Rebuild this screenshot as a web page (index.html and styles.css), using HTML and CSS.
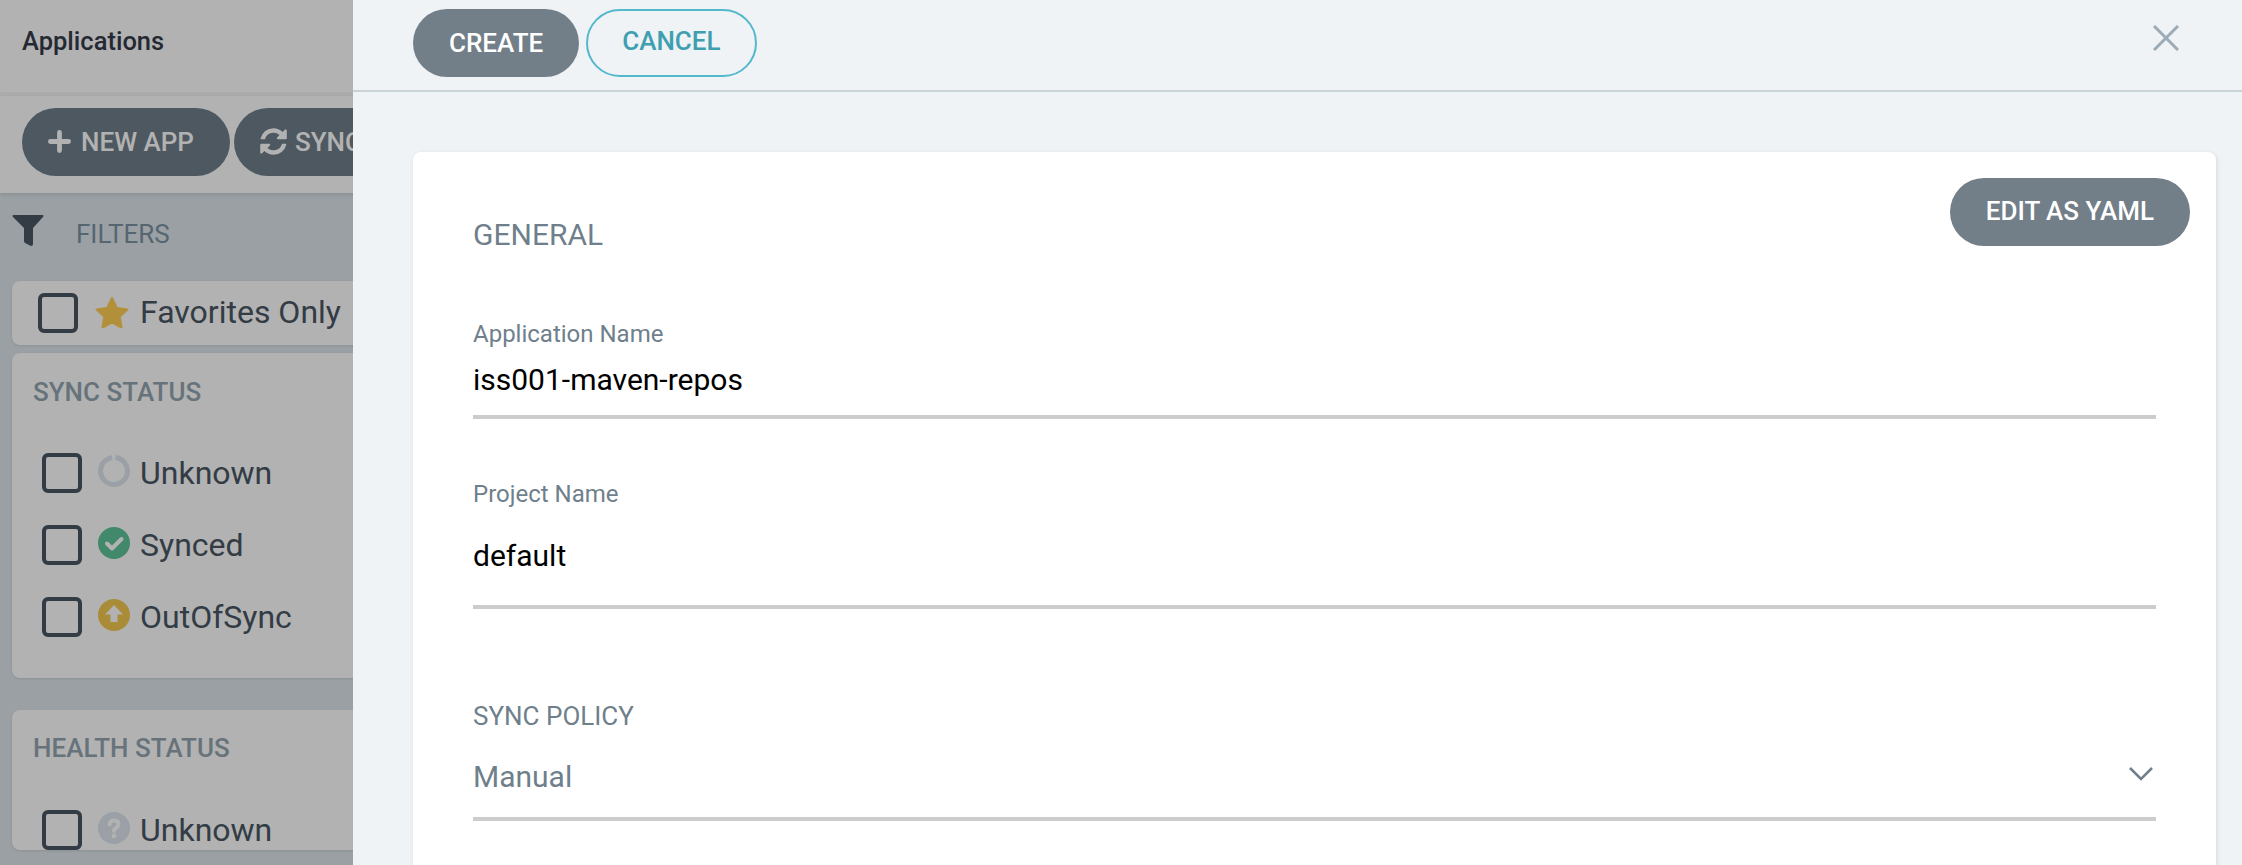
FILE: index.html
```html
<!DOCTYPE html>
<html lang="en">
<head>
<meta charset="utf-8">
<title>Applications</title>
<link rel="stylesheet" href="styles.css">
</head>
<body>
<div class="page">
  <aside class="side">
    <div class="topbar">Applications</div>
    <div class="toolbar">
      <button class="btn dark"><svg class="tool-icon" viewBox="0 0 24 24"><path d="M12 2.500v19M2.500 12h19"/></svg>NEW APP</button>
      <button class="btn dark"><svg class="sync-icon" viewBox="0 0 1792 1792"><path d="M1639 1056q0 5-1 7-64 268-268 434.5t-478 166.5q-146 0-282.5-55t-243.5-157l-129 129q-19 19-45 19t-45-19-19-45v-448q0-26 19-45t45-19h448q26 0 45 19t19 45-19 45l-137 137q71 66 161 102t187 36q134 0 250-65t186-179q11-17 53-117 8-23 30-23h192q13 0 22.5 9.5t9.5 22.5zm25-800v448q0 26-19 45t-45 19h-448q-26 0-45-19t-19-45 19-45l138-138q-148-137-349-137-134 0-250 65t-186 179q-11 17-53 117-8 23-30 23h-199q-13 0-22.5-9.5t-9.5-22.5v-7q65-268 270-434.5t480-166.5q146 0 284 55.5t245 156.5l130-129q19-19 45-19t45 19 19 45z"/></svg>SYNC APPS</button>
    </div>
    <div class="filters">
      <div class="filters-head">
        <svg class="funnel" viewBox="0 0 32 32"><path d="M1 0h30q1 1 0 2L21 13v16q0 2-2 2l-6-3q-1-1-1-2V13L1 2q-1-1 0-2z"/></svg>
        <span class="filters-label">FILTERS</span>
      </div>
      <div class="card fav">
        <span class="check"></span>
        <svg class="star" viewBox="0 0 34 32"><path d="M17 2l4.800 9.900 10.700 1.500-7.800 7.500 1.900 10.700L17 26.400l-9.600 5.200 1.900-10.700-7.800-7.500 10.700-1.500z"/></svg>
        <span class="row-text fav-text">Favorites Only</span>
      </div>
      <div class="card group sync-group">
        <div class="group-title">SYNC STATUS</div>
        <div class="row">
          <span class="check"></span>
          <svg class="status" viewBox="0 0 32 32"><circle class="ring" cx="16" cy="16" r="13.500" stroke-dasharray="81 3.800" transform="rotate(-84 16 16)"/></svg>
          <span class="row-text">Unknown</span>
        </div>
        <div class="row">
          <span class="check"></span>
          <svg class="status" viewBox="0 0 32 32"><circle class="green" cx="16" cy="16" r="16"/><path class="tick" d="M9 16.500l5 5 9.500-9.500"/></svg>
          <span class="row-text">Synced</span>
        </div>
        <div class="row">
          <span class="check"></span>
          <svg class="status" viewBox="0 0 32 32"><circle class="amber" cx="16" cy="16" r="16"/><path class="arrow" d="M16 6l9 9.500h-5.500V23h-7v-7.500H7z"/></svg>
          <span class="row-text">OutOfSync</span>
        </div>
      </div>
      <div class="card group health-group">
        <div class="group-title">HEALTH STATUS</div>
        <div class="row">
          <span class="check"></span>
          <svg class="status" viewBox="0 0 32 32"><circle class="grey" cx="16" cy="16" r="16"/><path class="tick" d="M11.500 12.500q.5-4 4.500-4 4.500 0 4.500 3.800 0 2.200-2.300 3.500-2.200 1.300-2.200 3.200"/><circle class="dot" cx="16" cy="24" r="2.400"/></svg>
          <span class="row-text">Unknown</span>
        </div>
      </div>
    </div>
  </aside>

  <main class="panel">
    <header class="panel-head">
      <button class="btn slate">CREATE</button>
      <button class="btn outline">CANCEL</button>
      <svg class="close" viewBox="0 0 26 26"><path d="M1 1l24 24M25 1L1 25"/></svg>
    </header>
    <div class="panel-body">
      <section class="form-card">
        <button class="btn slate yaml">EDIT AS YAML</button>
        <h2 class="section-title">GENERAL</h2>
        <div class="field app-field">
          <label class="field-label">Application Name</label>
          <div class="field-value">iss001-maven-repos</div>
        </div>
        <div class="field project-field">
          <label class="field-label">Project Name</label>
          <div class="field-value">default</div>
        </div>
        <div class="field policy-field">
          <label class="policy-label">SYNC POLICY</label>
          <div class="field-value select">Manual<svg class="chevron" viewBox="0 0 24 14"><path d="M1 1l11 11L23 1"/></svg></div>
        </div>
      </section>
    </div>
  </main>
</div>
</body>
</html>
```
FILE: styles.css
```css
* { box-sizing: border-box; }
html, body { margin: 0; height: 100%; overflow: hidden; }
body { font-family: Roboto, "Liberation Sans", sans-serif; background: #fff; }
.page { display: flex; width: 2242px; height: 865px; overflow: hidden; }

/* dimmed application behind the slide-out panel */
.side { position: relative; width: 353px; flex: none; overflow: hidden; background: #dee6eb; }
.side::after { content: ""; position: absolute; inset: 0; background: rgba(0, 0, 0, .3); }
.topbar { height: 96px; padding: 23px 22px 0; background: #fff; border-bottom: 4px solid #f6f6f6; font-size: 25.5px; line-height: 36px; font-weight: 500; color: #363c4a; }
.toolbar { display: flex; gap: 4px; width: 600px; height: 97px; padding: 12px 0 0 22px; background: #fff; box-shadow: 0 2px 4px rgba(0, 0, 0, .1); }

.btn { display: inline-flex; align-items: center; justify-content: center; flex: none; height: 68px; padding-bottom: 2px; border: 0; border-radius: 34px; font-family: inherit; font-size: 26px; font-weight: 500; color: #fff; }
.dark { padding-left: 26px; padding-right: 36px; background: #6f7f8b; white-space: nowrap; }
.tool-icon { width: 23px; height: 23px; margin-right: 10px; fill: none; stroke: #fff; stroke-width: 5; stroke-linecap: round; }
.sync-icon { width: 31px; height: 31px; margin-left: -2px; margin-right: 6px; fill: #fff; }

.filters { width: 500px; padding-left: 12px; }
.filters-head { display: flex; align-items: center; height: 88px; color: #7b92a3; font-size: 26px; }
.filters-label { margin: 0 0 6px 32px; }
.funnel { width: 32px; height: 32px; margin-bottom: 12px; fill: #495763; }

.card { background: #fff; border-radius: 8px; box-shadow: 0 1px 3px rgba(0, 0, 0, .1); }
.fav { display: flex; align-items: center; height: 64px; padding-left: 26px; margin-bottom: 8px; }
.star { width: 34px; height: 32px; margin: 0 11px 2px 17px; fill: #ffcf52; stroke: #ffcf52; stroke-width: 2; stroke-linejoin: round; }
.fav-text { margin-bottom: 2px; }
.check { display: block; flex: none; width: 40px; height: 40px; border: 4px solid #495763; border-radius: 6px; }
.row-text { font-size: 32px; line-height: 40px; color: #495763; }
.group { padding: 21px 0 0 21px; }
.health-group { padding-top: 20px; }
.health-group .group-title + .row { margin-top: 44px; }
.sync-group { height: 325px; margin-bottom: 32px; }
.group-title { height: 36px; font-size: 26px; line-height: 36px; font-weight: 500; color: #94a5b1; }
.row { display: flex; align-items: center; height: 40px; margin-bottom: 32px; padding-left: 9px; }
.group-title + .row { margin-top: 43px; }
.status { flex: none; width: 32px; height: 32px; margin: -4px 10px 0 16px; }
.ring { fill: none; stroke: #dde6ec; stroke-width: 5; }
.green { fill: #5ec599; }
.amber { fill: #f4c851; }
.grey { fill: #dde6ec; }
.tick { fill: none; stroke: #fff; stroke-width: 4; stroke-linecap: round; stroke-linejoin: round; }
.arrow, .dot { fill: #fff; }

/* slide-out panel */
.panel { flex: 1; min-width: 0; background: #eff3f6; }
.panel-head { display: flex; align-items: center; gap: 7px; height: 92px; padding: 0 0 4px 60px; border-bottom: 2px solid #c9d2d6; }
.slate { padding-left: 36px; padding-right: 36px; background: #727e88; }
.outline { padding: 0 34px 4px; background: transparent; border: 2px solid #53b8cc; color: #3f9fb1; }
.close { width: 26px; height: 26px; margin: 0 63px 10px auto; fill: none; stroke: #9cabb5; stroke-width: 3; }
.panel-body { padding: 60px 26px 0 60px; }
.form-card { position: relative; height: 900px; padding: 65px 60px 0; background: #fff; border-radius: 8px; box-shadow: 1px 1px 4px rgba(0, 0, 0, .1); }
.yaml { position: absolute; top: 26px; right: 26px; padding-bottom: 4px; }
.section-title { margin: 0; font-size: 30px; line-height: 36px; font-weight: 400; color: #6f7f8b; }
.field { border-bottom: 4px solid #ccc; }
.field-label, .policy-label { display: block; font-size: 24px; line-height: 32px; color: #6f7f8b; }
.policy-label { font-size: 26px; }
.field-value { font-size: 30px; line-height: 40px; color: #000; }
.app-field { height: 101px; margin-top: 65px; }
.app-field .field-value { margin-top: 10px; }
.project-field { height: 131px; margin-top: 59px; }
.project-field .field-value { margin-top: 26px; }
.policy-field { height: 121px; margin-top: 91px; }
.select { position: relative; margin-top: 25px; color: #6f7f8b; }
.chevron { position: absolute; right: 3px; top: 10px; width: 24px; height: 14px; fill: none; stroke: #6f7f8b; stroke-width: 2.500; }
```
